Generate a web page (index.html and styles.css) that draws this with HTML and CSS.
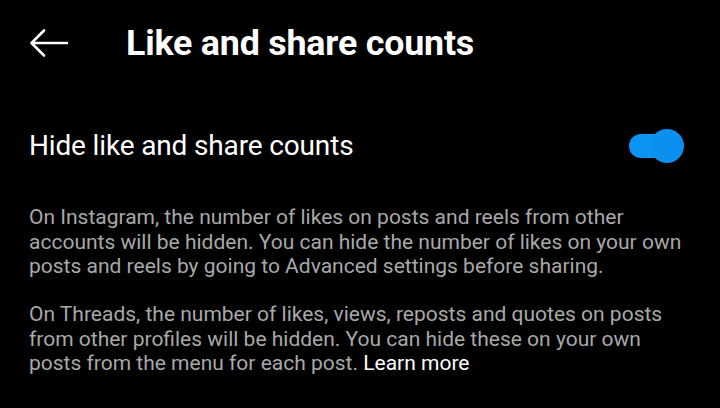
FILE: index.html
```html
<!DOCTYPE html>
<html>
<head>
<meta charset="utf-8">
<link rel="stylesheet" href="styles.css">
</head>
<body>
<div class="screen">
  <header class="topbar">
    <span class="back">
      <svg width="40" height="30" viewBox="0 0 40 30"><path d="M38 15H3M15 2.5L2.5 15L15 27.5" fill="none" stroke="#fff" stroke-width="2.6" stroke-linecap="round" stroke-linejoin="round"/></svg>
    </span>
    <h1 class="title">Like and share counts</h1>
  </header>
  <div class="row">
    <span class="row-label">Hide like and share counts</span>
    <span class="toggle"><span class="track"></span><span class="thumb"></span></span>
  </div>
  <div class="desc">
    <p>On Instagram, the number of likes on posts and reels from other accounts will be hidden. You can hide the number of likes on your own posts and reels by going to Advanced settings before sharing.</p>
    <p>On Threads, the number of likes, views, reposts and quotes on posts from other profiles will be hidden. You can hide these on your own posts from the menu for each post. <span class="link">Learn more</span></p>
  </div>
</div>
</body>
</html>
```
FILE: styles.css
```css
html, body {
  margin: 0;
  padding: 0;
  background: #000;
}
.screen {
  width: 720px;
  height: 408px;
  overflow: hidden;
  background: #000;
  color: #fff;
  font-family: Roboto, "Noto Sans", sans-serif;
}
.topbar {
  display: flex;
  align-items: center;
  height: 86px;
  padding-left: 29px;
}
.back {
  display: flex;
  width: 97px;
}
.title {
  margin: 0;
  font-size: 35.8px;
  font-weight: 700;
  letter-spacing: -0.2px;
}
.row {
  display: flex;
  align-items: center;
  justify-content: space-between;
  height: 119px;
  padding: 0 36px 0 29px;
}
.row-label {
  font-size: 28px;
  letter-spacing: -0.15px;
}
.toggle {
  position: relative;
  width: 55px;
  height: 34px;
}
.track {
  position: absolute;
  left: 0;
  top: 5px;
  width: 48px;
  height: 24px;
  border-radius: 12px;
  background: #0a95f5;
}
.thumb {
  position: absolute;
  right: 0;
  top: 0;
  width: 34px;
  height: 34px;
  border-radius: 50%;
  background: #0b90f0;
}
.desc {
  padding: 0 30px 0 29px;
  color: #a8a8a8;
  font-size: 21px;
  line-height: 24.5px;
  letter-spacing: 0;
}
.desc p {
  margin: 0 0 23.5px;
}
.link {
  color: #fff;
}
```
